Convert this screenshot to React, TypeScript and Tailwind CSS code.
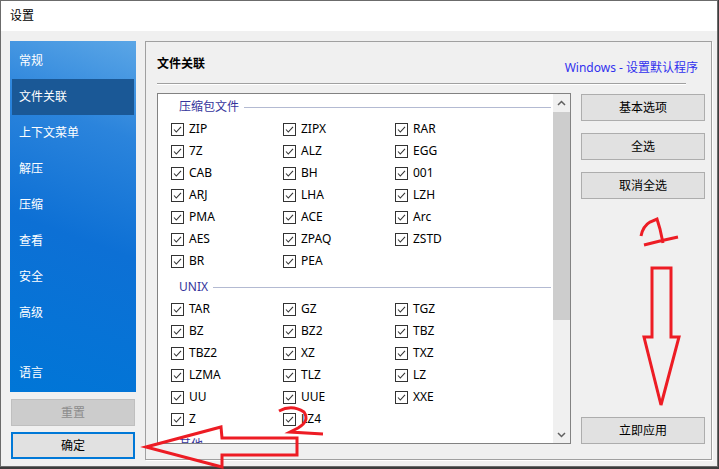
import React from 'react';

const NAV = ['常规', '文件关联', '上下文菜单', '解压', '压缩', '查看', '安全', '高级'];

const GROUPS = [
  {
    title: '压缩包文件',
    items: ['ZIP', 'ZIPX', 'RAR', '7Z', 'ALZ', 'EGG', 'CAB', 'BH', '001', 'ARJ', 'LHA', 'LZH', 'PMA', 'ACE', 'Arc', 'AES', 'ZPAQ', 'ZSTD', 'BR', 'PEA'],
  },
  {
    title: 'UNIX',
    items: ['TAR', 'GZ', 'TGZ', 'BZ', 'BZ2', 'TBZ', 'TBZ2', 'XZ', 'TXZ', 'LZMA', 'TLZ', 'LZ', 'UU', 'UUE', 'XXE', 'Z', 'LZ4'],
  },
  {
    title: '其他',
    items: [] as string[],
  },
];

const Check = ({ label }: { label: string }) => (
  <div className="flex h-[22px] items-center">
    <span className="flex h-[13px] w-[13px] items-center justify-center border border-[#333333] bg-white">
      <svg width="11" height="11" viewBox="0 0 11 11">
        <path d="M2 5.5 L4.3 8 L9 2.8" fill="none" stroke="#333333" strokeWidth="1.1" />
      </svg>
    </span>
    <span className="ml-[5px] leading-[14px]">{label}</span>
  </div>
);

const Btn = ({ children, className = '' }: { children: React.ReactNode; className?: string }) => (
  <button
    type="button"
    className={`flex h-[27px] w-[124px] items-center justify-center border border-[#adadad] bg-[#e1e1e1] text-[12px] leading-[14px] text-black ${className}`}
  >
    {children}
  </button>
);

export default function App() {
  return (
    <div className="relative h-[469px] w-[719px] overflow-hidden bg-[#3c3c3c] font-['Noto_Sans','Noto_Sans_CJK_SC',sans-serif] text-[12px] text-black">
      <div className="flex h-[467px] w-[718px] flex-col border border-[#6b6b6b] bg-[#f0f0f0]">
        {/* title bar */}
        <div className="flex h-[30px] items-center bg-white pl-[9px] leading-[14px]">设置</div>

        <div className="flex pl-[9px] pt-[10px]">
          {/* sidebar */}
          <div className="flex w-[126px] flex-col">
            <div className="flex h-[351px] flex-col bg-[linear-gradient(200deg,#5ba6e6_0%,#2b84dc_25%,#0d70d5_55%,#0076d7_100%)] px-[2px] pb-[1px] pt-[2px] text-white">
              {NAV.map((n) => (
                <div
                  key={n}
                  className={`flex h-[36px] items-center pl-[7px] leading-[14px] ${n === '文件关联' ? 'bg-[#1a5896]' : ''}`}
                >
                  {n}
                </div>
              ))}
              <div className="mt-auto flex h-[36px] items-center pl-[7px] leading-[14px]">语言</div>
            </div>
            <button
              type="button"
              className="mx-[1px] mt-[7px] flex h-[27px] items-center justify-center border border-[#bfbfbf] bg-[#cccccc] leading-[14px] text-[#8c8c8c]"
            >
              重置
            </button>
            <button
              type="button"
              className="mx-[1px] mt-[6px] flex h-[27px] items-center justify-center border-2 border-[#0078d7] bg-[#e1e1e1] leading-[14px]"
            >
              确定
            </button>
          </div>

          {/* main panel */}
          <div className="ml-[9px] flex h-[419px] w-[567px] flex-col border border-[#a0a0a0] shadow-[1px_1px_0_#ffffff]">
            <div className="flex h-[41px] items-start justify-between pl-[11px] pr-[13px] pt-[14px]">
              <span className="font-bold leading-[16px]">文件关联</span>
              <span className="mt-[4px] leading-[16px] text-[#3030ee]">Windows - 设置默认程序</span>
            </div>
            <div className="ml-[11px] h-px w-[529px] bg-[#a0a0a0] shadow-[0_1px_0_#ffffff]" />

            <div className="mt-[9px] flex pl-[11px]">
              {/* list */}
              <div className="flex h-[351px] w-[414px] border border-[#828282] bg-white">
                <div className="h-full flex-1 overflow-hidden pt-[2px]">
                  {GROUPS.map((g, gi) => (
                    <div key={g.title} className={gi > 0 ? 'mt-[4px]' : ''}>
                      <div className="flex h-[22px] items-center pl-[21px] pr-[2px]">
                        <span className="leading-[14px] text-[#34349c]">{g.title}</span>
                        <span className="ml-[5px] h-px flex-1 bg-[#b3bad2]" />
                      </div>
                      <div className="grid grid-cols-[112px_112px_112px] pl-[13px]">
                        {g.items.map((it) => (
                          <Check key={it} label={it} />
                        ))}
                      </div>
                    </div>
                  ))}
                </div>
                {/* scrollbar */}
                <div className="flex h-full w-[17px] flex-col bg-[#f0f0f0]">
                  <div className="flex h-[18px] items-center justify-center">
                    <svg width="9" height="6" viewBox="0 0 9 6">
                      <path d="M1 5 L4.5 1.5 L8 5" fill="none" stroke="#606060" strokeWidth="1.5" />
                    </svg>
                  </div>
                  <div className="h-[208px] bg-[#cdcdcd]" />
                  <div className="mt-auto flex h-[17px] items-center justify-center">
                    <svg width="9" height="6" viewBox="0 0 9 6">
                      <path d="M1 1 L4.5 4.5 L8 1" fill="none" stroke="#606060" strokeWidth="1.5" />
                    </svg>
                  </div>
                </div>
              </div>

              {/* buttons */}
              <div className="ml-[10px] mt-[1px] flex h-[350px] flex-col gap-[12px]">
                <Btn>基本选项</Btn>
                <Btn>全选</Btn>
                <Btn>取消全选</Btn>
                <Btn className="mt-auto">立即应用</Btn>
              </div>
            </div>
          </div>
        </div>
      </div>

      {/* red hand-drawn annotations */}
      <svg className="pointer-events-none absolute left-0 top-0" width="719" height="469" viewBox="0 0 719 469">
        <g fill="none" stroke="#ed1c24" strokeWidth="3" strokeLinejoin="miter">
          <polygon points="146,447 221,427 222,438 297,438 297,455 222,455 222,467" />
          <path d="M279 411 Q292 404 304 412 Q310 421 298 428 L290 432 L323 434" />
          <polygon points="652,337 652,268 671,268 671,337 679,337 661,405 644,337" />
          <path d="M641 236 Q643 226 650 222 L657 219 L660 229 L663 243 M644 245 L660 241 L678 237" />
        </g>
      </svg>
    </div>
  );
}
